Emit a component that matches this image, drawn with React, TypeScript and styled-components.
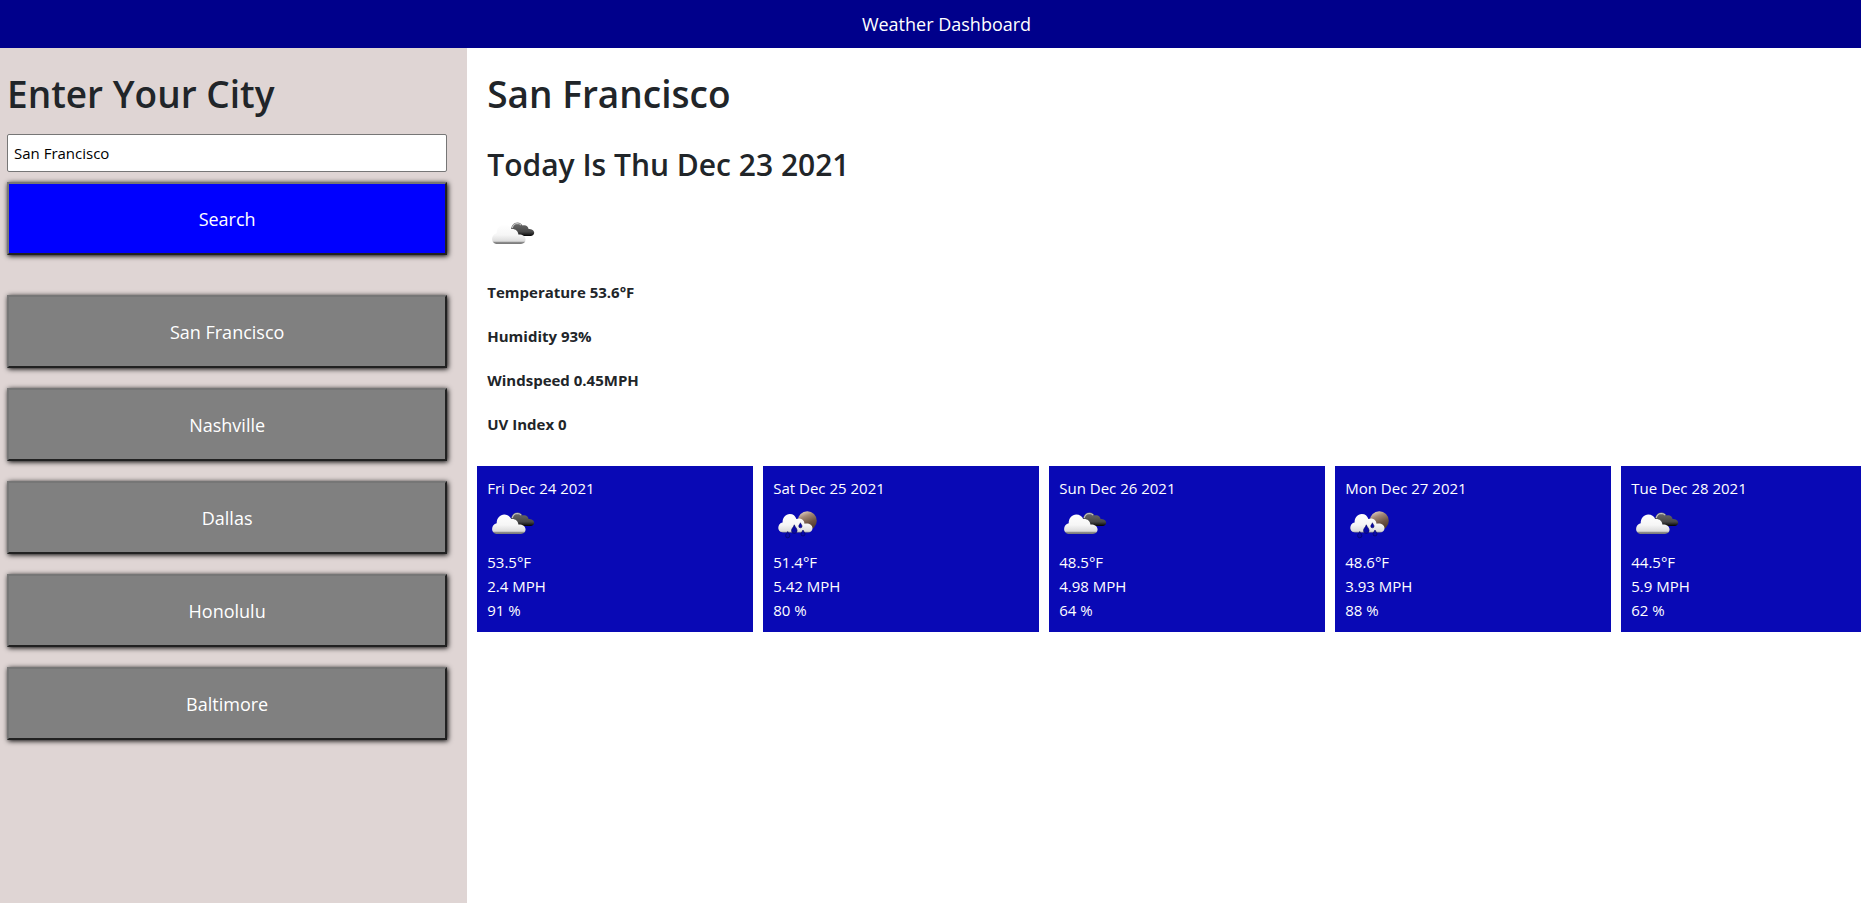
import React, { useState } from 'react';
import styled, { createGlobalStyle } from 'styled-components';

const GlobalStyle = createGlobalStyle`
  *, *::before, *::after { box-sizing: border-box; }
  body {
    margin: 0;
    background: #ffffff;
    color: #212529;
    font-family: 'Segoe UI', 'Open Sans', 'Noto Sans', sans-serif;
    font-size: 15px;
    line-height: 24px;
  }
`;

const Header = styled.header`
  height: 48px;
  padding-left: 32px;
  display: flex;
  align-items: center;
  justify-content: center;
  background: #00008b;
  color: #ffffff;
  font-size: 18px;
`;

const Page = styled.div`
  display: flex;
  min-height: calc(100vh - 48px);
`;

const Sidebar = styled.aside`
  flex: none;
  width: calc(25% + 2px);
  padding: 22px 20px 20px 7px;
  background: #dfd5d4;
`;

const Title = styled.h1`
  margin: 0;
  font-size: 37px;
  font-weight: 600;
  line-height: 48px;
`;

const SearchForm = styled.form`
  display: flex;
  flex-direction: column;
  gap: 10px;
  margin: 0;
`;

const CityLabel = styled.label`
  display: block;
  margin-bottom: 6px;
  font-size: 37px;
  font-weight: 600;
  line-height: 48px;
`;

const CityInput = styled.input`
  width: 100%;
  height: 38px;
  padding: 0 6px;
  border: 1px solid #767676;
  border-radius: 2px;
  background: #ffffff;
  color: #000000;
  font: inherit;
`;

const CityButton = styled.button<{ $primary?: boolean }>`
  width: 100%;
  height: 73px;
  padding: 0;
  border: 2px solid;
  border-color: #767676 #212121 #212121 #767676;
  background: ${(p) => (p.$primary ? '#0000ff' : '#808080')};
  box-shadow: 1px 1px 5px #000000;
  color: #ffffff;
  font: inherit;
  font-size: 18px;
`;

const History = styled.nav`
  display: flex;
  flex-direction: column;
  gap: 20px;
  margin-top: 40px;
`;

const Main = styled.main`
  flex: 1;
  min-width: 0;
  padding: 22px 0 20px 10px;
  overflow: hidden;
`;

const Current = styled.section`
  display: flex;
  flex-direction: column;
  align-items: flex-start;
  padding-left: 10px;
`;

const Today = styled.h2`
  margin: 28px 0 26px;
  font-size: 30px;
  font-weight: 600;
  line-height: 38px;
`;

const Stats = styled.div`
  display: flex;
  flex-direction: column;
  gap: 20px;
  margin: 20px 0 30px;
  font-weight: 700;
`;

const Stat = styled.p`
  margin: 0;
`;

const Forecast = styled.section`
  display: flex;
  gap: 10px;
`;

const DayCard = styled.article`
  flex: none;
  width: 276px;
  padding: 10px;
  background: #0909b5;
  color: #ffffff;
`;

const Icon = styled.svg`
  display: block;
  width: 50px;
  height: 50px;
`;

const Line = styled.div``;

type Sky = 'clouds' | 'rain';

function WeatherIcon({ kind, id }: { kind: Sky; id: string }) {
  const white = `white-${id}`;
  const back = `back-${id}`;
  const shine = `shine-${id}`;
  return (
    <Icon viewBox="0 0 50 50" role="img" aria-label={kind === 'rain' ? 'Rain' : 'Cloudy'}>
      <defs>
        <linearGradient id={white} gradientUnits="userSpaceOnUse" x1="0" y1="14" x2="0" y2="34">
          <stop offset="0" stopColor="#ffffff" />
          <stop offset="0.55" stopColor="#f6f6f6" />
          <stop offset="0.86" stopColor="#dcdcdc" />
          <stop offset="0.92" stopColor="#8c8c8c" />
          <stop offset="1" stopColor="#777777" />
        </linearGradient>
        <linearGradient id={back} gradientUnits="userSpaceOnUse" x1="0" y1="12" x2="0" y2="26">
          <stop offset="0" stopColor="#707070" />
          <stop offset="0.7" stopColor="#484848" />
          <stop offset="0.88" stopColor="#202020" />
          <stop offset="1" stopColor="#000000" />
        </linearGradient>
        <linearGradient id={shine} x1="0.2" y1="0" x2="0.6" y2="1">
          <stop offset="0" stopColor="#e6d6cc" />
          <stop offset="0.3" stopColor="#a48978" />
          <stop offset="0.65" stopColor="#6d5445" />
          <stop offset="1" stopColor="#4d382c" />
        </linearGradient>
      </defs>
      {kind === 'clouds' ? (
        <>
          <path
            fill={`url(#${back})`}
            d="M24 20.5C24 15.5 26.8 12.4 30.4 12.4c2.6 0 4.4 1.3 5.2 3.2 2.6-1 5.6.4 6 3.4 3 .1 5.600 1.400 5.600 3.800 0 2-1.700 3.200-3.600 3.200H28z"
          />
          <path
            fill="none"
            stroke="#c4c4c4"
            strokeWidth="1.2"
            d="M25.2 18c.8-2.8 2.6-4.4 5.2-4.5 1.6 0 2.8.6 3.6 1.5"
          />
          <path
            fill={`url(#${white})`}
            d="M10 34c-2.8 0-4.9-2.2-4.9-5 0-2.9 1.9-5.3 4.6-5.7C9.6 18.3 13 14.6 17.3 14.6c3.2 0 5.7 1.7 6.9 4.5 3.5-.6 6.9 1.6 7.2 5.4 3.9-.2 7.2 1.6 7.2 5.1 0 2.6-2 4.4-4.6 4.4z"
          />
        </>
      ) : (
        <>
          <circle cx="34.3" cy="20.7" r="9.5" fill={`url(#${shine})`} />
          <path
            fill={`url(#${white})`}
            d="M10 32.5c-2.7 0-4.7-2.1-4.7-4.7 0-2.8 1.7-5 4.3-5.4C9.5 17.6 12.6 14 16.8 14c3.3 0 5.7 1.9 6.5 5 3.9-1.7 8 .6 8.2 4.7 3.8-1 8 .6 8 4.6 0 2.6-1.9 4.2-4.4 4.2z"
          />
          <g fill="#0909a8" stroke="#05055c" strokeWidth="0.6">
            <path d="M14.7 31.5c.5 1.6 2.1 2.6 2.1 4.2a2.1 2.1 0 0 1-4.2 0c0-1.6 1.6-2.6 2.1-4.2z" />
            <path d="M21.3 24.8c.6 2.2 2.8 3.6 2.8 5.8a2.8 2.8 0 0 1-5.6 0c0-2.2 2.2-3.6 2.8-5.8z" />
            <path d="M27.4 22.8c.4 1.3 1.6 2.1 1.6 3.4a1.6 1.6 0 0 1-3.2 0c0-1.3 1.2-2.1 1.6-3.4z" />
            <path d="M30 30c.5 1.5 2 2.4 2 4a2 2 0 0 1-4 0c0-1.6 1.5-2.5 2-4z" />
          </g>
        </>
      )}
    </Icon>
  );
}

const cities = ['San Francisco', 'Nashville', 'Dallas', 'Honolulu', 'Baltimore'];

const stats = ['Temperature 53.6°F', 'Humidity 93%', 'Windspeed 0.45MPH', 'UV Index 0'];

const days: { date: string; sky: Sky; temp: string; wind: string; humidity: string }[] = [
  { date: 'Fri Dec 24 2021', sky: 'clouds', temp: '53.5°F', wind: '2.4 MPH', humidity: '91 %' },
  { date: 'Sat Dec 25 2021', sky: 'rain', temp: '51.4°F', wind: '5.42 MPH', humidity: '80 %' },
  { date: 'Sun Dec 26 2021', sky: 'clouds', temp: '48.5°F', wind: '4.98 MPH', humidity: '64 %' },
  { date: 'Mon Dec 27 2021', sky: 'rain', temp: '48.6°F', wind: '3.93 MPH', humidity: '88 %' },
  { date: 'Tue Dec 28 2021', sky: 'clouds', temp: '44.5°F', wind: '5.9 MPH', humidity: '62 %' },
];

export default function App() {
  const [city, setCity] = useState('San Francisco');
  return (
    <>
      <GlobalStyle />
      <Header>Weather Dashboard</Header>
      <Page>
        <Sidebar>
          <SearchForm onSubmit={(e) => e.preventDefault()}>
            <CityLabel htmlFor="city">Enter Your City</CityLabel>
            <CityInput id="city" type="text" value={city} onChange={(e) => setCity(e.target.value)} />
            <CityButton type="submit" $primary>
              Search
            </CityButton>
          </SearchForm>
          <History aria-label="Recent cities">
            {cities.map((name) => (
              <CityButton key={name} type="button" onClick={() => setCity(name)}>
                {name}
              </CityButton>
            ))}
          </History>
        </Sidebar>
        <Main>
          <Current>
            <Title>San Francisco</Title>
            <Today>Today Is Thu Dec 23 2021</Today>
            <WeatherIcon kind="clouds" id="today" />
            <Stats>
              {stats.map((text) => (
                <Stat key={text}>{text}</Stat>
              ))}
            </Stats>
          </Current>
          <Forecast>
            {days.map((day, i) => (
              <DayCard key={day.date}>
                <Line>{day.date}</Line>
                <WeatherIcon kind={day.sky} id={`day${i}`} />
                <Line>{day.temp}</Line>
                <Line>{day.wind}</Line>
                <Line>{day.humidity}</Line>
              </DayCard>
            ))}
          </Forecast>
        </Main>
      </Page>
    </>
  );
}
